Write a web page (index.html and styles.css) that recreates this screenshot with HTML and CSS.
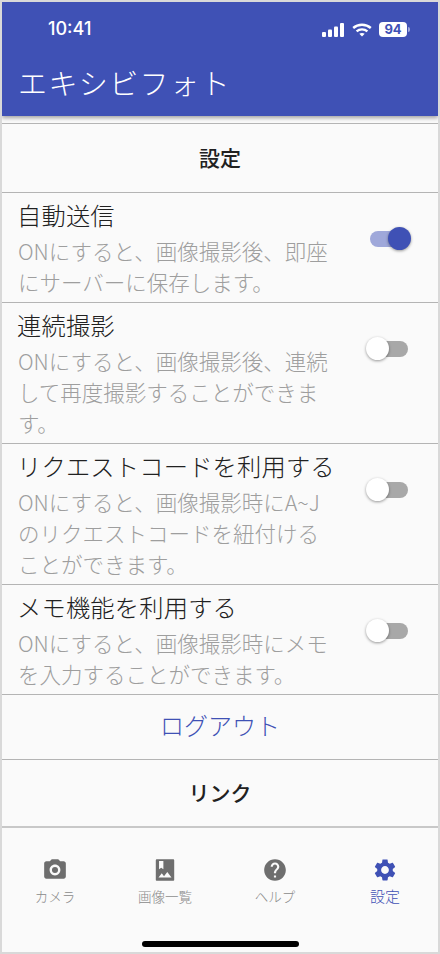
FILE: index.html
```html
<!DOCTYPE html>
<html lang="ja">
<head>
    <meta charset="UTF-8">
    <meta name="viewport" content="width=device-width, initial-scale=1.0">
    <title>エキシビフォト</title>
    <link rel="stylesheet" href="styles.css">
</head>
<body>
<div class="frame">
    <header class="app-header">
        <div class="status-bar">
            <span class="clock">10:41</span>
            <div class="status-icons">
                <svg width="23" height="14" viewBox="0 0 23 14" fill="#fff">
                    <rect x="0" y="9" width="4" height="5" rx="1"/>
                    <rect x="6" y="6.5" width="4" height="7.5" rx="1"/>
                    <rect x="12" y="3.5" width="4" height="10.5" rx="1"/>
                    <rect x="18" y="0" width="4" height="14" rx="1"/>
                </svg>
                <svg width="20" height="14" viewBox="0 0 20 14" fill="none" stroke="#fff" stroke-width="2.4">
                    <path d="M1.2 5C6 .6 14 .6 18.8 5"/>
                    <path d="M4.6 8.3c3-2.6 7.8-2.6 10.8 0"/>
                    <path d="M10 13.6l-2.7-2.8c1.5-1.1 3.9-1.1 5.4 0z" fill="#fff" stroke="none"/>
                </svg>
                <div class="battery"><span class="battery-level">94</span><span class="battery-cap"></span></div>
            </div>
        </div>
        <div class="app-title">エキシビフォト</div>
    </header>

    <main class="settings">
        <div class="section-title">設定</div>

        <div class="setting-row">
            <div class="setting-text">
                <div class="setting-name">自動送信</div>
                <div class="setting-desc">ONにすると、画像撮影後、即座にサーバーに保存します。</div>
            </div>
            <div class="toggle on"><span class="knob"></span></div>
        </div>
        <div class="setting-row">
            <div class="setting-text">
                <div class="setting-name">連続撮影</div>
                <div class="setting-desc">ONにすると、画像撮影後、連続して再度撮影することができます。</div>
            </div>
            <div class="toggle"><span class="knob"></span></div>
        </div>
        <div class="setting-row">
            <div class="setting-text">
                <div class="setting-name">リクエストコードを利用する</div>
                <div class="setting-desc">ONにすると、画像撮影時にA~Jのリクエストコードを紐付けることができます。</div>
            </div>
            <div class="toggle"><span class="knob"></span></div>
        </div>
        <div class="setting-row">
            <div class="setting-text">
                <div class="setting-name">メモ機能を利用する</div>
                <div class="setting-desc">ONにすると、画像撮影時にメモを入力することができます。</div>
            </div>
            <div class="toggle"><span class="knob"></span></div>
        </div>

        <div class="logout-row">ログアウト</div>
        <div class="section-title link-title">リンク</div>
    </main>

    <nav class="tab-bar">
        <div class="tab">
            <svg class="tab-icon" viewBox="0 0 24 24"><path d="M9 2 7.17 4H4c-1.1 0-2 .9-2 2v12c0 1.1.9 2 2 2h16c1.1 0 2-.9 2-2V6c0-1.1-.9-2-2-2h-3.17L15 2H9zm3 15c-2.76 0-5-2.24-5-5s2.24-5 5-5 5 2.24 5 5-2.24 5-5 5zm0-2.2a2.8 2.8 0 1 0 0-5.6 2.8 2.8 0 0 0 0 5.6z" fill-rule="evenodd"/></svg>
            <span>カメラ</span>
        </div>
        <div class="tab">
            <svg class="tab-icon" viewBox="0 0 24 24"><path d="M19.5 2h-15c-.6 0-1 .4-1 1v18c0 .6.4 1 1 1h15c.6 0 1-.4 1-1V3c0-.6-.4-1-1-1zM6.5 3.6h4v7.6L8.5 10l-2 1.2V3.600zM6 19l3-3.900 2.100 2.600 3-3.900L18 19H6z" fill-rule="evenodd"/></svg>
            <span>画像一覧</span>
        </div>
        <div class="tab">
            <svg class="tab-icon" viewBox="0 0 24 24"><path d="M12 2C6.48 2 2 6.48 2 12s4.48 10 10 10 10-4.48 10-10S17.52 2 12 2zm1 17h-2v-2h2v2zm2.070-7.750-.9.920C13.450 12.900 13 13.500 13 15h-2v-.5c0-1.100.45-2.100 1.170-2.830l1.240-1.260c.37-.36.59-.86.59-1.410 0-1.100-.9-2-2-2s-2 .9-2 2H8c0-2.210 1.790-4 4-4s4 1.790 4 4c0 .88-.36 1.680-.93 2.250z"/></svg>
            <span>ヘルプ</span>
        </div>
        <div class="tab active">
            <svg class="tab-icon" viewBox="0 0 24 24"><path d="M19.140 12.940c.04-.3.06-.61.06-.94 0-.32-.02-.64-.07-.94l2.030-1.580c.18-.14.23-.41.12-.61l-1.920-3.320c-.12-.22-.37-.29-.59-.22l-2.390.96c-.5-.38-1.030-.7-1.620-.94l-.36-2.540c-.04-.24-.24-.41-.48-.41h-3.840c-.24 0-.43.17-.47.41l-.36 2.540c-.59.24-1.130.57-1.620.94l-2.390-.96c-.22-.08-.47 0-.59.22L2.740 8.870c-.12.21-.08.47.12.61l2.030 1.580c-.05.3-.09.63-.09.94s.02.64.07.94l-2.030 1.580c-.18.14-.23.41-.12.61l1.920 3.320c.12.22.37.29.59.22l2.390-.96c.5.38 1.030.7 1.620.94l.36 2.540c.05.24.24.41.48.41h3.840c.24 0 .44-.17.47-.41l.36-2.540c.59-.24 1.130-.56 1.620-.94l2.390.96c.22.08.47 0 .59-.22l1.920-3.320c.12-.22.07-.47-.12-.61l-2.010-1.580zM12 15.600c-1.980 0-3.600-1.620-3.600-3.600s1.620-3.600 3.600-3.600 3.600 1.620 3.600 3.600-1.620 3.600-3.600 3.600z"/></svg>
            <span>設定</span>
        </div>
    </nav>

    <div class="home-area"><span class="home-indicator"></span></div>
</div>
</body>
</html>
```

FILE: styles.css
```css
* {
    box-sizing: border-box;
}
html, body {
    margin: 0;
    padding: 0;
}
body {
    width: 440px;
    height: 954px;
    overflow: hidden;
    font-family: "Noto Sans CJK JP", "Noto Sans", sans-serif;
    background: #d9d9d9;
}
.frame {
    margin: 2px;
    height: 950px;
    background: #fafafa;
    display: flex;
    flex-direction: column;
    overflow: hidden;
}

/* ヘッダー */
.app-header {
    height: 114px;
    background: #3f51b5;
    color: #fff;
    box-shadow: 0 2px 4px rgba(0, 0, 0, 0.35);
    position: relative;
    flex: none;
}
.status-bar {
    height: 52px;
    padding: 15px 28px 0 46px;
    display: flex;
    justify-content: space-between;
    align-items: flex-start;
}
.clock {
    font-family: Inter, sans-serif;
    font-size: 18px;
    font-weight: 500;
    line-height: 24px;
}
.status-icons {
    display: flex;
    align-items: center;
    gap: 7px;
    height: 24px;
    padding-top: 1px;
}
.battery {
    display: flex;
    align-items: center;
}
.battery-level {
    width: 28px;
    height: 15px;
    background: #fff;
    border-radius: 4px;
    color: #3f51b5;
    font-family: Inter, sans-serif;
    font-size: 13px;
    font-weight: 700;
    line-height: 15px;
    text-align: center;
}
.battery-cap {
    width: 2px;
    height: 5px;
    margin-left: 1px;
    background: rgba(255, 255, 255, 0.5);
    border-radius: 0 2px 2px 0;
}
.app-title {
    padding-left: 16px;
    font-size: 29px;
    font-weight: 300;
    letter-spacing: 1.4px;
    line-height: 56px;
}

/* 設定リスト */
.settings {
    margin-top: 7px;
    flex: none;
    border-top: 1px solid #b4b4b4;
}
.section-title {
    height: 69px;
    padding-bottom: 3px;
    border-bottom: 1px solid #b4b4b4;
    display: flex;
    align-items: center;
    justify-content: center;
    font-size: 21px;
    font-weight: 500;
    color: #212121;
}
.link-title {
    height: 68px;
    padding-bottom: 2px;
    border-bottom: 2px solid #c8c8c8;
}
.setting-row {
    display: flex;
    align-items: flex-start;
    padding: 4px 30px 5px 16px;
    border-bottom: 1px solid #b4b4b4;
}
.setting-text {
    width: 316px;
    flex: none;
}
.setting-name {
    font-size: 24.3px;
    font-weight: 300;
    letter-spacing: 0.15px;
    line-height: 36px;
    margin-bottom: 2px;
    margin-left: -1px;
    color: #212121;
    white-space: nowrap;
}
.setting-desc {
    font-size: 21.5px;
    font-weight: 300;
    line-height: 31px;
    color: #9e9e9e;
    word-break: break-all;
}
.toggle {
    position: relative;
    width: 38px;
    height: 16px;
    margin-top: 34px;
    margin-left: auto;
    border-radius: 8px;
    background: #a8a8a8;
}
.knob {
    position: absolute;
    left: -4px;
    top: -4px;
    width: 23px;
    height: 23px;
    border-radius: 50%;
    background: #fff;
    box-shadow: 0 1px 3px rgba(0, 0, 0, 0.4);
}
.toggle.on {
    background: #9fa8da;
}
.toggle.on .knob {
    left: auto;
    right: -3px;
    background: #3f51b5;
}
.logout-row {
    height: 65px;
    padding-bottom: 5px;
    border-bottom: 1px solid #b4b4b4;
    display: flex;
    align-items: center;
    justify-content: center;
    color: #3f51b5;
    font-size: 24px;
    font-weight: 300;
}

/* タブバー */
.tab-bar {
    display: flex;
    flex: none;
    margin: 0 -2px;
    padding-top: 29px;
}
.tab {
    flex: 1;
    display: flex;
    flex-direction: column;
    align-items: center;
    color: #8a8a8a;
    font-size: 13.5px;
    font-weight: 300;
    line-height: 20px;
}
.tab-icon {
    width: 26px;
    height: 26px;
    fill: #6e6e6e;
    margin-bottom: 3px;
}
.tab.active {
    color: #3f51b5;
    font-size: 15px;
}
.tab.active .tab-icon {
    fill: #3f51b5;
}
.home-area {
    flex: 1;
    display: flex;
    justify-content: center;
    align-items: flex-end;
    padding-bottom: 5px;
}
.home-indicator {
    width: 157px;
    height: 6px;
    border-radius: 3px;
    background: #000;
}
```
